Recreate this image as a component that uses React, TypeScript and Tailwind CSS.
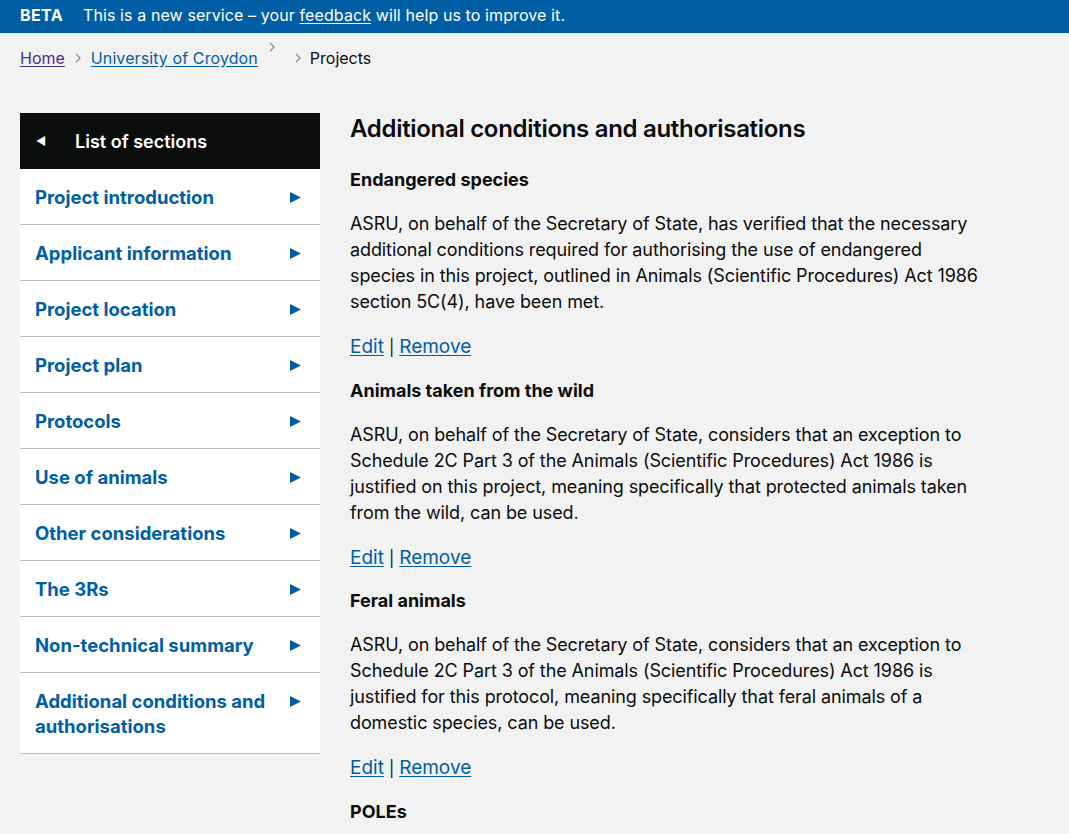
import React from 'react';

const sections = [
  'Project introduction',
  'Applicant information',
  'Project location',
  'Project plan',
  'Protocols',
  'Use of animals',
  'Other considerations',
  'The 3Rs',
  'Non-technical summary',
  'Additional conditions and authorisations',
];

const conditions = [
  {
    title: 'Endangered species',
    text: 'ASRU, on behalf of the Secretary of State, has verified that the necessary additional conditions required for authorising the use of endangered species in this project, outlined in Animals (Scientific Procedures) Act 1986 section 5C(4), have been met.',
  },
  {
    title: 'Animals taken from the wild',
    text: 'ASRU, on behalf of the Secretary of State, considers that an exception to Schedule 2C Part 3 of the Animals (Scientific Procedures) Act 1986 is justified on this project, meaning specifically that protected animals taken from the wild, can be used.',
  },
  {
    title: 'Feral animals',
    text: 'ASRU, on behalf of the Secretary of State, considers that an exception to Schedule 2C Part 3 of the Animals (Scientific Procedures) Act 1986 is justified for this protocol, meaning specifically that feral animals of a domestic species, can be used.',
  },
];

function Chevron({ className = '' }: { className?: string }) {
  return (
    <svg width="8" height="12" viewBox="0 0 8 12" className={className}>
      <path d="M2 2 L6 6 L2 10" fill="none" stroke="#8a8a8a" strokeWidth="1.2" />
    </svg>
  );
}

export default function App() {
  return (
    <div className="min-h-[834px] bg-[#f2f2f2] text-[#0b0c0c]" style={{ fontFamily: 'Inter, "Noto Sans", sans-serif' }}>
      {/* beta banner */}
      <div className="h-[33px] bg-[#005ea5] text-white flex items-center px-5 pb-[3px] text-[16px]">
        <span className="font-bold w-[63px] tracking-wide">BETA</span>
        <span className="tracking-[0.1px]">
          This is a new service – your <a href="#" className="underline underline-offset-2">feedback</a> will help us to improve it.
        </span>
      </div>

      {/* breadcrumbs */}
      <div className="flex items-center px-5 h-[50px] text-[16px]">
        <a href="#" className="text-[#4c2c92] underline underline-offset-2">Home</a>
        <Chevron className="mx-[9px]" />
        <a href="#" className="text-[#005ea5] underline underline-offset-2 tracking-[0.1px]">University of Croydon</a>
        <Chevron className="ml-[10px] mb-[22px]" />
        <Chevron className="ml-[18px] mr-[8px]" />
        <span>Projects</span>
      </div>

      <div className="flex px-5 pt-[30px] gap-[30px]">
        {/* sidebar */}
        <div className="w-[300px] shrink-0">
          <div className="h-[56px] bg-[#0b0c0c] text-white flex items-center">
            <span className="w-[55px] pl-[16px] text-[11px]">◀</span>
            <span className="font-semibold text-[18px]">List of sections</span>
          </div>
          {sections.map((s) => (
            <a
              key={s}
              href="#"
              className="flex items-start justify-between bg-white border-b border-[#c0c0c0] pl-[15px] pr-[19px] pt-[16px] pb-[14px] text-[#005ea5] font-bold text-[18.5px] leading-[25px]"
            >
              <span className="max-w-[240px]">{s}</span>
              <svg width="12" height="25" viewBox="0 0 12 25" className="shrink-0">
                <path d="M1 7 L12 12.5 L1 18 Z" fill="#005ea5" />
              </svg>
            </a>
          ))}
        </div>

        {/* main */}
        <div className="w-[628px]">
          <h2 className="text-[24px] font-semibold leading-[32px] mb-[23px] tracking-[-0.3px]">Additional conditions and authorisations</h2>
          {conditions.map((c) => (
            <div key={c.title}>
              <h3 className="text-[18px] font-bold leading-[24px] mb-[19px]">{c.title}</h3>
              <p className="text-[18px] leading-[26px] mb-[19px] tracking-[-0.1px]">{c.text}</p>
              <p className="text-[19px] leading-[26px] mb-[18.7px]">
                <a href="#" className="text-[#005ea5] underline underline-offset-2">Edit</a>
                <span className="text-[16px] mx-[5px]">|</span>
                <a href="#" className="text-[#005ea5] underline underline-offset-2">Remove</a>
              </p>
            </div>
          ))}
          <h3 className="text-[18px] font-bold leading-[24px]">POLEs</h3>
        </div>
      </div>
    </div>
  );
}
